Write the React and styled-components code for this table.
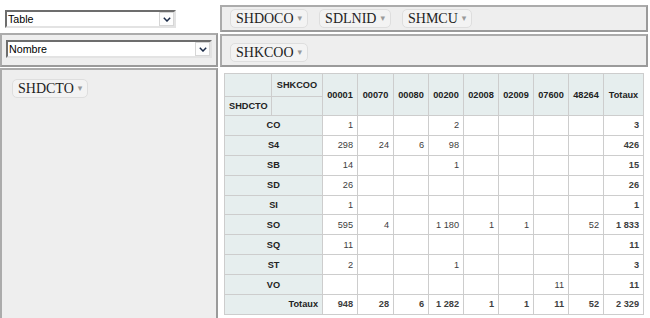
import React from 'react';
import styled, { createGlobalStyle } from 'styled-components';

const GlobalStyle = createGlobalStyle`
  html, body {
    margin: 0;
    padding: 0;
    background: #fff;
    overflow: hidden;
  }
  body {
    font-family: "Liberation Serif", "Times New Roman", serif;
    color: #333;
  }
`;

const Layout = styled.div`
  display: grid;
  grid-template-columns: 218px 428px;
  grid-template-rows: 33px 35px 250px;
  column-gap: 2px;
  height: 318px;
  overflow: hidden;
`;

const RendererCell = styled.div`
  background: #fff;
  padding: 10px 0 0 5px;
`;

const AxisBox = styled.div`
  box-sizing: border-box;
  background: #eeeeee;
  border: 2px solid;
  border-color: #ababab #9a9a9a #9a9a9a #ababab;
  display: flex;
  align-items: ${p => (p.$vertical ? 'flex-start' : 'center')};
  gap: 11px;
  padding: ${p => p.$pad || '0 8px'};
  margin-top: ${p => p.$top || 0}px;
  height: ${p => (p.$h ? `${p.$h}px` : 'auto')};
`;

const AggregatorCell = styled(AxisBox)`
  padding: 5px 0 0 4px;
  align-items: flex-start;
`;

const Pill = styled.span`
  display: inline-flex;
  align-items: center;
  gap: 4px;
  background: #f3f3f3;
  border: 1px solid #dedede;
  border-radius: 5px;
  padding: 1px 5px;
  font-size: 14px;
  line-height: 15px;
  color: #222;
  white-space: nowrap;
`;

const Triangle = styled.span`
  color: #9a9a9a;
  font-size: 9px;
  font-family: "DejaVu Sans", sans-serif;
  line-height: 1;
`;

const Select = styled.div`
  box-sizing: border-box;
  width: ${p => p.$w}px;
  height: 18px;
  display: flex;
  align-items: center;
  justify-content: space-between;
  background: #fff;
  border: 2px solid;
  border-color: #6d6d6d #e3e3e3 #e3e3e3 #6d6d6d;
  font-family: "Liberation Sans", Arial, sans-serif;
  font-size: 10.7px;
  color: #000;
  padding-left: 1px;
`;

const SelectButton = styled.span`
  box-sizing: border-box;
  width: 15px;
  height: 14px;
  display: flex;
  align-items: center;
  justify-content: center;
  border: 1px solid #d6d6d6;
  background: #fdfdfd;
`;

const Chevron = () => (
  <svg width="8" height="5" viewBox="0 0 8 5">
    <path d="M0.8 0.8 L4 4 L7.2 0.8" fill="none" stroke="#1b2b48" strokeWidth="1.5" />
  </svg>
);

const Dropdown = ({ label, width }) => (
  <Select $w={width}>
    <span>{label}</span>
    <SelectButton>
      <Chevron />
    </SelectButton>
  </Select>
);

const TableArea = styled.div`
  padding: 5px 0 0 4px;
`;

const Pivot = styled.table`
  border-collapse: collapse;
  table-layout: fixed;
  width: 419px;
  font-family: "Liberation Sans", Arial, sans-serif;
  font-size: 9.2px;
`;

const Th = styled.th`
  background: #e6eeee;
  border: 1px solid #cdcdcd;
  font-weight: bold;
  color: #222;
  padding: 0 4px;
  text-align: ${p => p.$align || 'center'};
  white-space: nowrap;
`;

const Td = styled.td`
  background: #fff;
  border: 1px solid #cdcdcd;
  color: #3d3d3d;
  padding: 0 4px;
  text-align: right;
  font-weight: ${p => (p.$total ? 'bold' : 'normal')};
  white-space: nowrap;
`;

const HeadRow = styled.tr`
  height: ${p => p.$h}px;
`;

const BodyRow = styled.tr`
  height: 19.9px;
`;

const cols = ['00001', '00070', '00080', '00200', '02008', '02009', '07600', '48264'];
const widths = [47, 51, 35, 36, 35, 35, 35, 35, 35, 35, 40];

const rows = [
  ['CO', [1, null, null, 2], 3],
  ['S4', [298, 24, 6, 98], 426],
  ['SB', [14, null, null, 1], 15],
  ['SD', [26], 26],
  ['SI', [1], 1],
  ['SO', [595, 4, null, 1180, 1, 1, null, 52], 1833],
  ['SQ', [11], 11],
  ['ST', [2, null, null, 1], 3],
  ['VO', [null, null, null, null, null, null, 11], 11],
];
const colTotals = [948, 28, 6, 1282, 1, 1, 11, 52];
const grandTotal = 2329;

const fmt = n => (n == null ? '' : String(n).replace(/\B(?=(\d{3})+(?!\d))/g, ' '));

export default function App() {
  return (
    <>
      <GlobalStyle />
      <Layout>
        <RendererCell>
          <Dropdown label="Table" width={171} />
        </RendererCell>
        <AxisBox $top={5} $h={27}>
          <Pill>SHDOCO<Triangle>▾</Triangle></Pill>
          <Pill>SDLNID<Triangle>▾</Triangle></Pill>
          <Pill>SHMCU<Triangle>▾</Triangle></Pill>
        </AxisBox>

        <AggregatorCell $h={34}>
          <Dropdown label="Nombre" width={206} />
        </AggregatorCell>
        <AxisBox $top={1} $h={33} $pad="3px 8px 0">
          <Pill>SHKCOO<Triangle>▾</Triangle></Pill>
        </AxisBox>

        <AxisBox $vertical $h={270} $pad="9px 10px">
          <Pill>SHDCTO<Triangle>▾</Triangle></Pill>
        </AxisBox>
        <TableArea>
          <Pivot>
            <colgroup>
              {widths.map((w, i) => (
                <col key={i} style={{ width: w }} />
              ))}
            </colgroup>
            <thead>
              <HeadRow $h={23}>
                <Th />
                <Th>SHKCOO</Th>
                {cols.map(c => (
                  <Th key={c} rowSpan={2}>{c}</Th>
                ))}
                <Th rowSpan={2}>Totaux</Th>
              </HeadRow>
              <HeadRow $h={19}>
                <Th>SHDCTO</Th>
                <Th />
              </HeadRow>
            </thead>
            <tbody>
              {rows.map(([label, vals, total]) => (
                <BodyRow key={label}>
                  <Th colSpan={2}>{label}</Th>
                  {cols.map((c, i) => (
                    <Td key={c}>{fmt(vals[i])}</Td>
                  ))}
                  <Td $total>{fmt(total)}</Td>
                </BodyRow>
              ))}
              <BodyRow>
                <Th colSpan={2} $align="right">Totaux</Th>
                {colTotals.map((v, i) => (
                  <Td key={i} $total>{fmt(v)}</Td>
                ))}
                <Td $total>{fmt(grandTotal)}</Td>
              </BodyRow>
            </tbody>
          </Pivot>
        </TableArea>
      </Layout>
    </>
  );
}
